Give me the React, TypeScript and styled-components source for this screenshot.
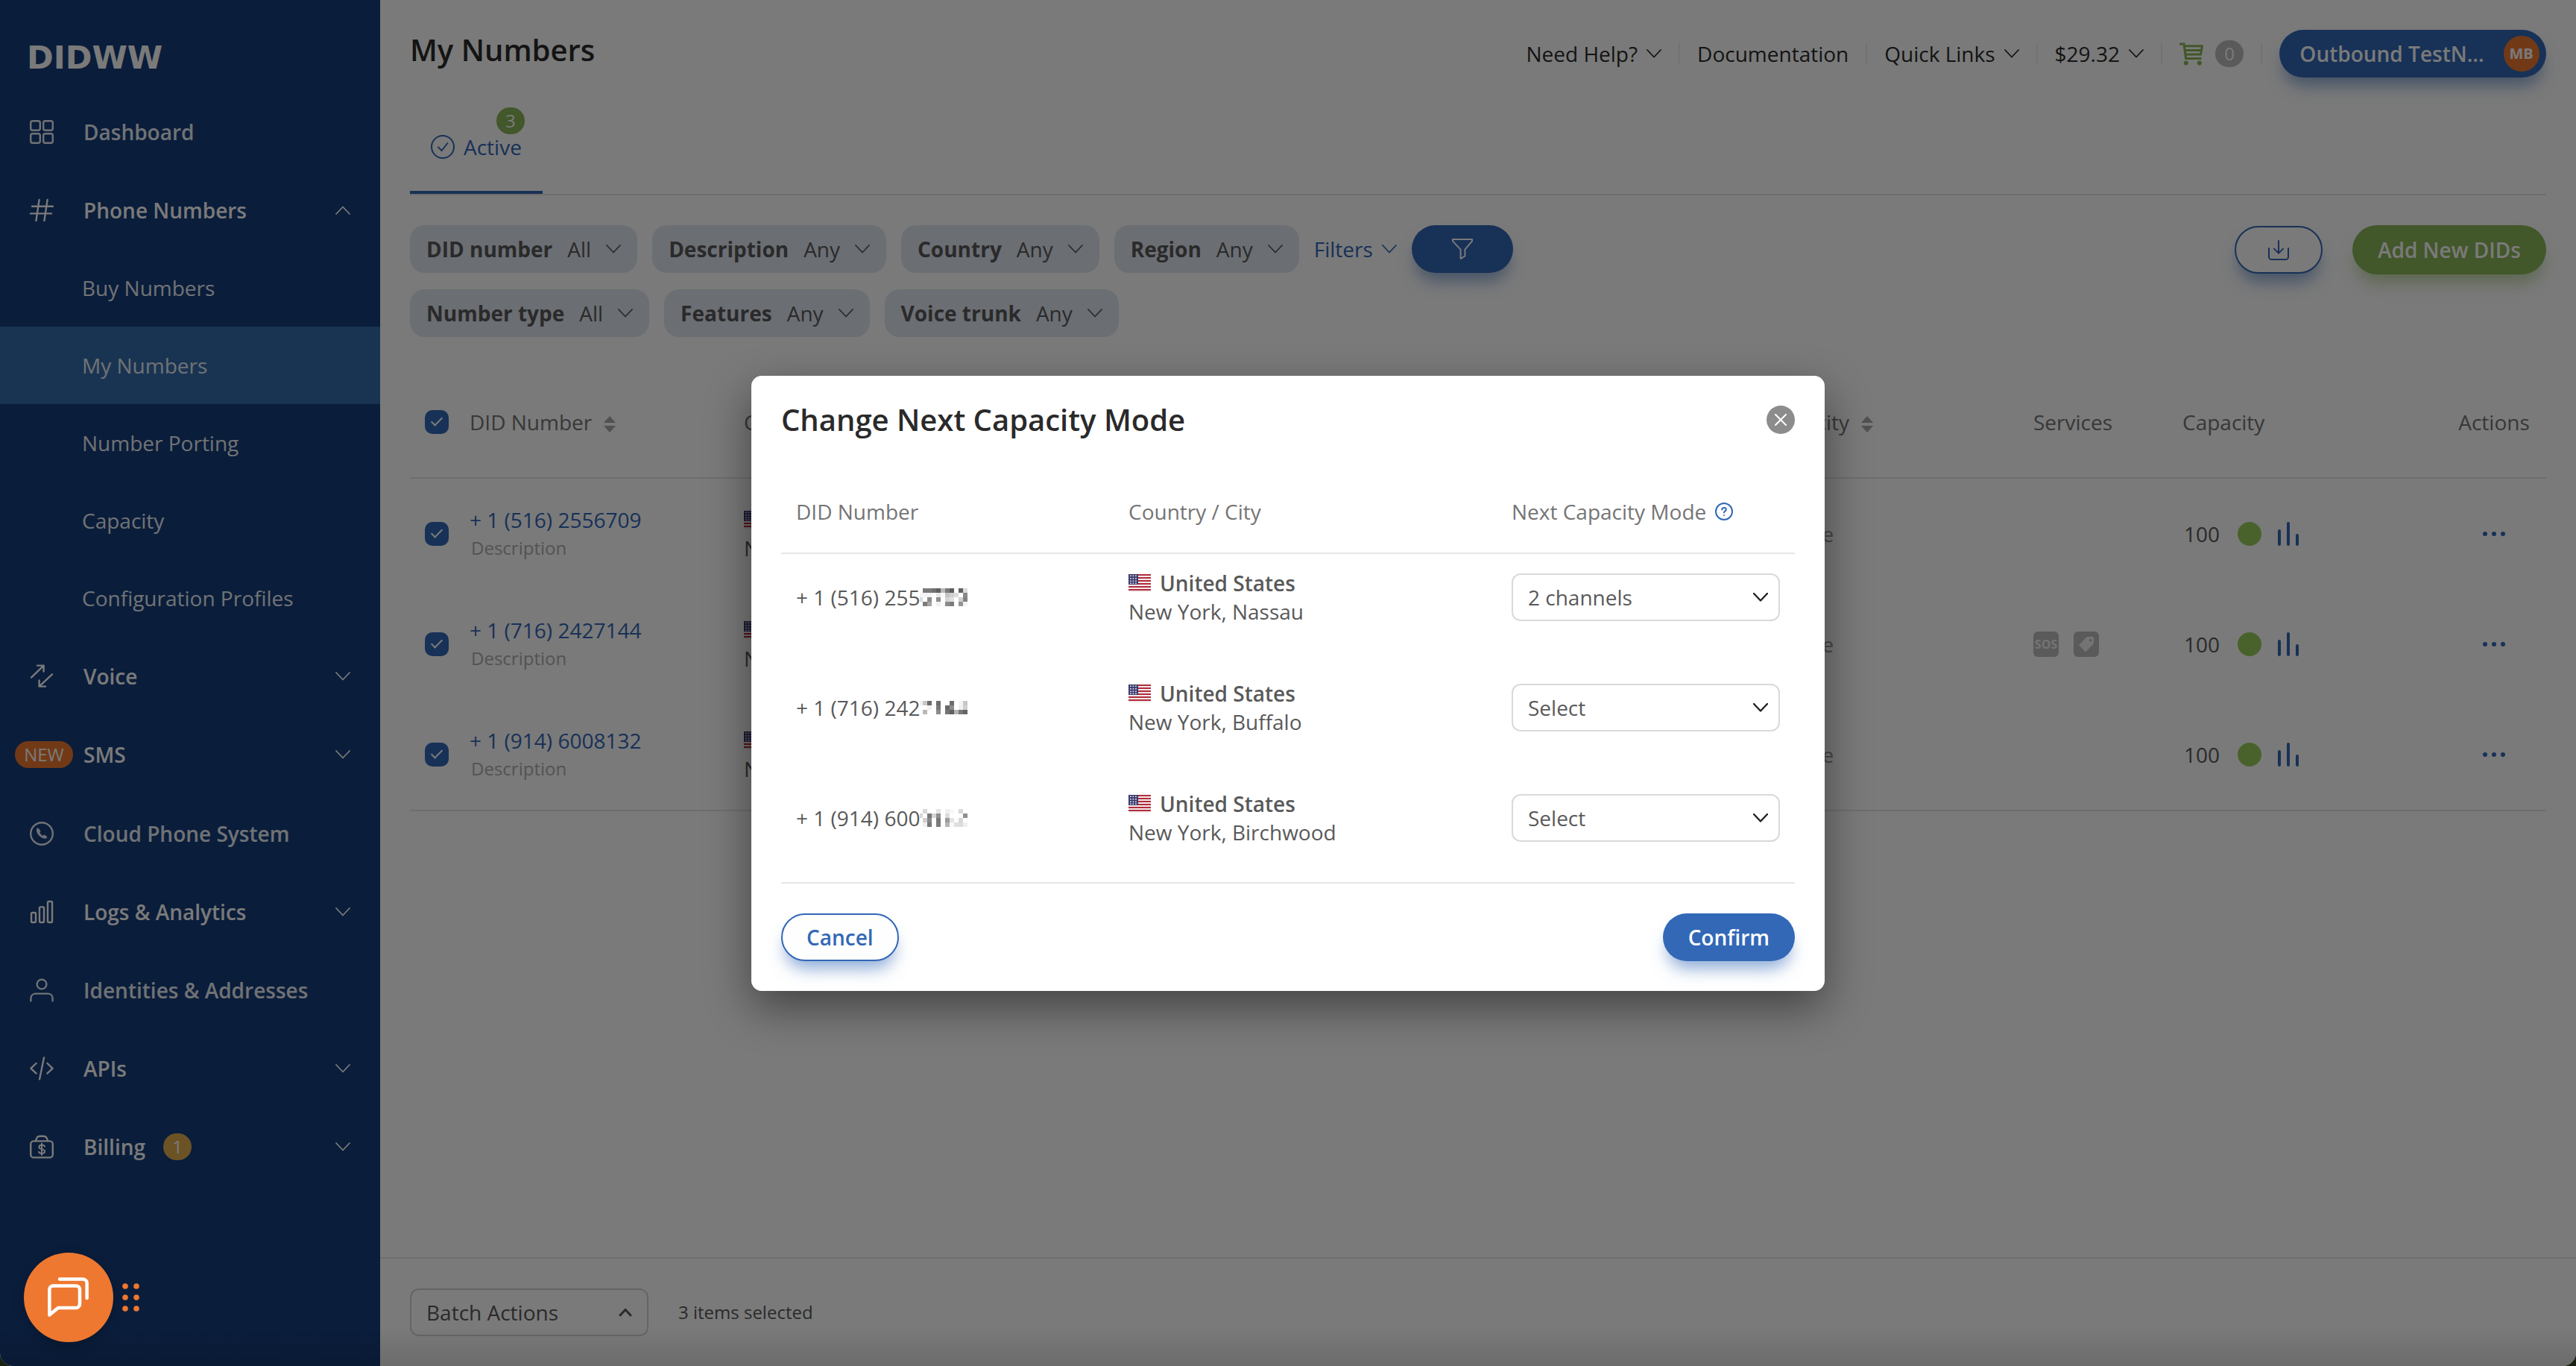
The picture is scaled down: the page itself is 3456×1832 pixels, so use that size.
import React from "react";
import styled, { createGlobalStyle, css } from "styled-components";

const color = {
  navy: "#163e7b",
  navyActive: "#366eab",
  blue: "#3268b6",
  green: "#8ab658",
  lime: "#9ace5c",
  orange: "#ee7830",
  gold: "#dfae4e",
  page: "#fefefe",
  ink: "#2a2a2a",
  text: "#595959",
  muted: "#757575",
  faint: "#aeaeae",
  line: "#e6e6e6",
  chip: "#e0e6f0",
  badge: "#bdbdbd",
};

const GlobalStyle = createGlobalStyle`
  *, *::before, *::after { box-sizing: border-box; }
  html { background: #1b2112; }
  body {
    margin: 0;
    font-family: "Open Sans", "Noto Sans", sans-serif;
    font-size: 28px;
    line-height: 38px;
    color: ${color.text};
  }
  button, select, input { font: inherit; color: inherit; margin: 0; }
  button { border: 0; background: none; padding: 0; cursor: pointer; }
  a { color: inherit; text-decoration: none; }
  h1, h2 { margin: 0; font-size: 40px; line-height: 54px; font-weight: 600; color: ${color.ink}; }
  svg { display: block; flex: none; }
`;

const Page = styled.div`
  position: relative;
  display: flex;
  min-height: 100vh;
  overflow: hidden;
  border-radius: 0 0 18px 18px;
  background: ${color.page};
`;

/* ---------- icons ---------- */

const Chevron = ({ up, heavy }: { up?: boolean; heavy?: boolean }) => (
  <svg width="20" height="12" viewBox="0 0 20 12" fill="none" stroke="currentColor"
    strokeWidth={heavy ? 2.4 : 1.8} strokeLinecap="round" strokeLinejoin="round" aria-hidden="true">
    <path d={up ? "M1 11L10 1.5L19 11" : "M1 1L10 10.5L19 1"} />
  </svg>
);

const NavSvg = styled.svg.attrs({
  width: 32, height: 32, viewBox: "0 0 32 32", fill: "none", stroke: "currentColor",
  strokeWidth: 2.4, strokeLinecap: "round", strokeLinejoin: "round", "aria-hidden": true,
})``;

const DashboardIcon = () => (
  <NavSvg>
    <rect x="1.2" y="1.2" width="12.6" height="12.6" rx="2.5" />
    <rect x="18.2" y="1.2" width="12.6" height="12.6" rx="2.5" />
    <rect x="1.2" y="18.2" width="12.6" height="12.6" rx="2.5" />
    <rect x="18.2" y="18.2" width="12.6" height="12.6" rx="2.5" />
  </NavSvg>
);
const HashIcon = () => (
  <NavSvg><path d="M12.6 2L8.4 30M23.6 2L19.4 30M3 10.8H31M1 20.4H29" /></NavSvg>
);
const VoiceIcon = () => (
  <NavSvg><path d="M2 17.6L18.6 1.6M10 1.6H18.6V9.6M30 13.4L12.6 29.6M12.6 21.4V29.6H21" /></NavSvg>
);
const PhoneIcon = () => (
  <NavSvg>
    <circle cx="16" cy="16" r="14.8" />
    <path d="M9.6 9.4C8.6 12.4 10.4 16.4 13.2 19C16 21.6 19.6 23 22.4 21.8L23 20.4L19.6 18L17.4 19.2C15.6 18.4 13.6 16.4 13 14.8L14 12.4L11.4 9Z" fill="currentColor" strokeWidth="0.8" />
  </NavSvg>
);
const StatsIcon = () => (
  <NavSvg>
    <rect x="2" y="17" width="6" height="13" rx="1.4" />
    <rect x="13" y="9.4" width="6" height="20.6" rx="1.4" />
    <rect x="24" y="2" width="6" height="28" rx="1.4" />
  </NavSvg>
);
const PersonIcon = () => (
  <NavSvg>
    <circle cx="16" cy="8" r="6.4" />
    <path d="M1.4 30.4V27C1.4 23 4.4 20.6 8 20.6H24C27.6 20.6 30.6 23 30.6 27V30.4" />
  </NavSvg>
);
const CodeIcon = () => (
  <NavSvg><path d="M8.6 9L1.4 15.8L8.6 22.6M23.4 9L30.6 15.8L23.4 22.6M19 1.4L13 30.4" /></NavSvg>
);
const BillingIcon = () => (
  <NavSvg>
    <rect x="1.2" y="8.4" width="29.6" height="22" rx="4" />
    <path d="M8 8C8.6 4 11 1.8 14 1.8H18C21 1.8 23.4 4 24 8" />
    <path d="M20 15.6C19.4 14 17.8 13.6 16 13.6C14 13.6 12.4 14.6 12.4 16.4C12.4 20 20 18.2 20 22C20 24 18.2 25 16 25C14 25 12.4 24.4 12 22.8M16 11.6V27" strokeWidth="2" />
  </NavSvg>
);

const Flag = () => (
  <svg width="30" height="24" viewBox="0 0 30 24" role="img" aria-label="US">
    <rect width="30" height="24" rx="2" fill="#f3e9ea" />
    {[0, 4, 8, 12, 16, 20].map((y) => (
      <rect key={y} y={y} width="30" height="2" fill="#b22c3c" />
    ))}
    <rect width="13" height="14" fill="#3c3b6e" />
    {[2, 5.5, 9].map((x) => [1.5, 5, 8.5, 11.5].map((y) => (
      <rect key={`${x}-${y}`} x={x} y={y} width="1.8" height="1.6" fill="#dfe0ee" />
    )))}
  </svg>
);

const SortIcon = () => (
  <svg width="16" height="22" viewBox="0 0 16 22" fill="#a9a9a9" aria-hidden="true">
    <path d="M8 0L16 9H0ZM8 22L0 13H16Z" />
  </svg>
);

/* ---------- sidebar ---------- */

const Sidebar = styled.nav`
  flex: none;
  width: 510px;
  background: ${color.navy};
  color: #fefefe;
`;
const Logo = styled.a`
  display: flex;
  align-items: flex-end;
  height: 124px;
  padding: 0 36px 24px;
  font-family: "DejaVu Sans", sans-serif;
  font-size: 43px;
  line-height: 46px;
  font-weight: 700;
`;
const navRow = css`
  display: flex;
  align-items: center;
  width: 100%;
  padding: 0 40px;
  text-align: left;
`;
const NavItem = styled.button<{ $badged?: boolean; $leaf?: boolean }>`
  ${navRow}
  height: ${(p) => (p.$badged ? 106 : 105)}px;
  font-weight: 600;
  ${(p) => p.$leaf && "color: #eaeff5;"}
`;
const NavIcon = styled.span<{ $pill?: boolean }>`
  display: flex;
  width: ${(p) => (p.$pill ? 52 : 32)}px;
  margin-left: ${(p) => (p.$pill ? -20 : 0)}px;
  margin-right: 40px;
`;
const NavLabel = styled.span`
  flex: 1;
  display: flex;
  align-items: center;
  gap: 24px;
`;
const SubItem = styled.a<{ $active?: boolean }>`
  ${navRow}
  height: 104px;
  padding-left: 110px;
  color: #eaeff5;
  background: ${(p) => (p.$active ? color.navyActive : "transparent")};
`;
const Pill = styled.span<{ $bg: string; $wide?: boolean }>`
  flex: none;
  display: flex;
  align-items: center;
  justify-content: center;
  width: ${(p) => (p.$wide ? 78 : 38)}px;
  height: 36px;
  border-radius: 18px;
  background: ${(p) => p.$bg};
  color: #fefefe;
  font-size: 24px;
  font-weight: 400;
`;

type Entry = { label: string; icon?: React.ReactNode; leaf?: boolean; open?: boolean; badge?: string; count?: number };
const entries: Entry[] = [
  { label: "Voice", icon: <VoiceIcon /> },
  { label: "SMS", badge: "NEW" },
  { label: "Cloud Phone System", icon: <PhoneIcon />, leaf: true },
  { label: "Logs & Analytics", icon: <StatsIcon /> },
  { label: "Identities & Addresses", icon: <PersonIcon />, leaf: true },
  { label: "APIs", icon: <CodeIcon /> },
  { label: "Billing", icon: <BillingIcon />, count: 1 },
];

const NavEntry = ({ label, icon, leaf, open, badge, count }: Entry) => (
  <NavItem $leaf={leaf} $badged={Boolean(badge || count)} aria-expanded={leaf ? undefined : Boolean(open)}>
    <NavIcon $pill={Boolean(badge)}>{badge ? <Pill $bg={color.orange} $wide>{badge}</Pill> : icon}</NavIcon>
    <NavLabel>{label}{count && <Pill $bg={color.gold}>{count}</Pill>}</NavLabel>
    {!leaf && <Chevron up={open} />}
  </NavItem>
);

/* ---------- main area ---------- */

const Main = styled.main`
  flex: 1;
  min-width: 0;
  display: flex;
  flex-direction: column;
`;
const TopBar = styled.header`
  display: flex;
  justify-content: space-between;
  align-items: flex-start;
  height: 144px;
  padding: 40px 40px 0;
`;
const TopNav = styled.div`
  display: flex;
  align-items: center;
  height: 64px;
  color: ${color.ink};
`;
const TopItem = styled.button`
  display: flex;
  align-items: center;
  gap: 12px;
  height: 30px;
  padding: 0 23px;
  border-right: 2px solid #eeeeee;
`;
const CartItem = styled(TopItem)`
  gap: 16px;
`;
const shadow = (rgb: string) => `0 16px 22px -6px rgba(${rgb}, 0.55)`;
const Solid = styled.button<{ $green?: boolean; $small?: boolean }>`
  display: flex;
  align-items: center;
  justify-content: center;
  height: ${(p) => (p.$green ? 66 : 64)}px;
  padding: 0 ${(p) => (p.$small ? 54 : 34)}px;
  border-radius: 33px;
  background: ${(p) => (p.$green ? color.green : color.blue)};
  box-shadow: ${(p) => shadow(p.$green ? "138,182,88" : "50,104,182")};
  color: #fefefe;
  font-weight: 600;
`;
const Account = styled(Solid)`
  gap: 26px;
  width: 358px;
  margin-left: 23px;
  padding: 0 10px 0 28px;
`;
const AccountName = styled.span`
  flex: 1;
  white-space: nowrap;
  text-align: left;
`;
const Avatar = styled.span`
  flex: none;
  width: 48px;
  height: 48px;
  border-radius: 50%;
  background: ${color.orange};
  font-size: 20px;
  line-height: 48px;
  text-align: center;
  font-weight: 700;
`;
const Outline = styled.button`
  display: flex;
  align-items: center;
  justify-content: center;
  height: 64px;
  padding: 0 32px;
  border: 2px solid ${color.blue};
  border-radius: 32px;
  background: ${color.page};
  box-shadow: ${shadow("50,104,182")};
  color: ${color.blue};
  font-weight: 600;
`;
const Download = styled(Outline)`
  width: 118px;
`;

const Tabs = styled.div`
  margin: 0 40px;
  border-bottom: 2px solid ${color.line};
`;
const Tab = styled.button`
  position: relative;
  display: flex;
  align-items: center;
  gap: 12px;
  height: 116px;
  padding: 34px 28px 40px;
  border-bottom: 4px solid ${color.blue};
  color: ${color.blue};
`;
const TabCount = styled.span`
  position: absolute;
  top: 0;
  right: 24px;
`;

const Toolbar = styled.section`
  display: flex;
  justify-content: space-between;
  align-items: flex-start;
  padding: 40px 40px 0;
`;
const ChipRows = styled.div`
  display: grid;
  gap: 22px;
`;
const Row = styled.div<{ $gap?: number }>`
  display: flex;
  align-items: center;
  gap: ${(p) => p.$gap ?? 20}px;
`;
const Chip = styled.button`
  display: flex;
  align-items: center;
  gap: 20px;
  height: 64px;
  padding: 0 22px;
  border-radius: 20px;
  background: ${color.chip};
`;
const FilterMore = styled.button`
  display: flex;
  align-items: center;
  gap: 12px;
  color: ${color.blue};
`;

const chipRows = [
  [["DID number", "All"], ["Description", "Any"], ["Country", "Any"], ["Region", "Any"]],
  [["Number type", "All"], ["Features", "Any"], ["Voice trunk", "Any"]],
];

const Listing = styled.section`
  padding: 40px 40px 0;
`;
const Table = styled.table`
  width: 100%;
  border-collapse: separate;
  border-spacing: 0;
  table-layout: fixed;
  border-bottom: 2px solid ${color.line};
  th, td { padding: 0; text-align: left; vertical-align: middle; height: 148px; }
  th { height: 150px; font-weight: 400; color: ${color.muted}; border-bottom: 2px solid ${color.line}; }
`;
const Col = styled.col<{ $w?: number }>`
  ${(p) => p.$w && `width: ${p.$w}px;`}
`;
const Check = styled.input.attrs({ type: "checkbox", defaultChecked: true })`
  appearance: none;
  display: grid;
  place-items: center;
  width: 32px;
  height: 32px;
  margin-left: 20px;
  border-radius: 10px;
  background: ${color.blue};
  &::after {
    content: "";
    width: 8px;
    height: 15px;
    margin-top: -5px;
    border: solid #fefefe;
    border-width: 0 2px 2px 0;
    transform: rotate(45deg);
  }
`;
const SortHead = styled.button`
  display: flex;
  align-items: center;
  gap: 16px;
  white-space: nowrap;
  svg { margin-top: 5px; }
`;
const NumberLink = styled.a`
  display: block;
  color: ${color.blue};
`;
const Note = styled.span`
  display: block;
  padding-left: 2px;
  font-size: 24px;
  color: ${color.faint};
`;
const Country = styled.strong`
  display: flex;
  align-items: center;
  gap: 12px;
  font-weight: 600;
`;
const Status = styled.span`
  color: #979797;
`;
const Dot = styled.span`
  width: 32px;
  height: 32px;
  border-radius: 50%;
  background: ${color.lime};
`;
const CapacityValue = styled.span`
  width: 50px;
  margin-left: 2px;
`;
const MoreButton = styled.button`
  display: flex;
  margin: 0 auto;
  color: ${color.blue};
`;
const ActionsHead = styled.th`
  && { text-align: center; }
`;
const IconTile = styled.span`
  display: flex;
  align-items: center;
  justify-content: center;
  width: 34px;
  height: 34px;
  border-radius: 6px;
  background: ${color.badge};
  color: #f2f2f2;
  font-size: 16px;
  font-weight: 700;
`;

const numbers = [
  { number: "+ 1 (516) 2556709", city: "New York, Nassau", services: false },
  { number: "+ 1 (716) 2427144", city: "New York, Buffalo", services: true },
  { number: "+ 1 (914) 6008132", city: "New York, Birchwood", services: false },
];

const Bottom = styled.footer`
  display: flex;
  align-items: center;
  gap: 40px;
  margin-top: auto;
  padding: 40px;
  border-top: 2px solid ${color.line};
  font-size: 24px;
`;
const Batch = styled.button`
  display: flex;
  align-items: center;
  justify-content: space-between;
  width: 320px;
  height: 64px;
  padding: 0 20px;
  border: 2px solid #d4d4d4;
  border-radius: 12px;
  font-size: 28px;
`;

/* ---------- dialog ---------- */

const Overlay = styled.div`
  position: absolute;
  inset: 0;
  display: flex;
  align-items: center;
  justify-content: center;
  background: linear-gradient(to top, rgba(0, 0, 0, 0.12), transparent 52px), rgba(0, 0, 0, 0.52);
`;
const Dialog = styled.section`
  width: 1440px;
  padding: 34px 40px 40px;
  border-radius: 14px;
  background: #ffffff;
  box-shadow: 0 22px 60px rgba(0, 0, 0, 0.45);
`;
const DialogHead = styled.header`
  display: flex;
  align-items: center;
  justify-content: space-between;
  height: 50px;
  margin-bottom: 53px;
`;
const Close = styled.button`
  display: flex;
  align-items: center;
  justify-content: center;
  width: 38px;
  height: 38px;
  border-radius: 50%;
  background: #8c8c8c;
  color: #ffffff;
`;
const ModeTable = styled.table`
  width: 100%;
  border-collapse: separate;
  border-spacing: 0;
  table-layout: fixed;
  border-bottom: 2px solid ${color.line};
  th, td { height: 148px; padding: 0 20px 32px; text-align: left; vertical-align: middle; }
  th { height: 102px; padding-bottom: 10px; font-weight: 400; color: ${color.muted}; border-bottom: 2px solid ${color.line}; }
  tbody tr:last-child td { height: 144px; padding-bottom: 28px; }
`;
const SelectBox = styled.span`
  display: grid;
  align-items: center;
  color: #222222;
  & > * { grid-area: 1 / 1; }
  & > svg { justify-self: end; margin-right: 16px; pointer-events: none; }
`;
const Select = styled.select`
  appearance: none;
  width: 100%;
  height: 64px;
  padding: 0 20px;
  border: 2px solid #d9d9d9;
  border-radius: 12px;
  background: #ffffff;
  color: ${color.text};
`;
const DialogFoot = styled.footer`
  display: flex;
  justify-content: space-between;
  padding-top: 40px;
`;

const mosaics = [
  ["ff7a7a7060b87a5cff60dc", "f4f4f4ffe8f8c4d0dcff88", "dcff8cff90ffd4e0ffd080", "ff7ca4fff0ff8c7cff94f4"],
  ["f0c86cff6cffff6cfff4c8", "fffff0ff78ff688cfff0d0", "ffb8ffff8cfc7460b47864"],
  ["ffd8ffffe4fff0f8ffd8ff", "d8ff78d490ffdcffffff90", "ffd088ff78ff9ce4ffd8ff", "fff078ff7cffb4f8e0dcf0"],
];
const Mosaic = ({ rows }: { rows: string[] }) => (
  <svg width="64" height={rows.length * 6} viewBox={`2 0 64 ${rows.length * 6}`} shapeRendering="crispEdges" aria-label="hidden digits">
    {rows.map((row, y) =>
      (row.match(/../g) ?? []).map((v, x) => (
        <rect key={`${x}-${y}`} x={x * 6} y={y * 6} width="6" height="6" fill={`#${v}${v}${v}`} />
      )),
    )}
  </svg>
);

const modes = [
  { prefix: "+ 1 (516) 255", value: "2 channels" },
  { prefix: "+ 1 (716) 242", value: "Select" },
  { prefix: "+ 1 (914) 600", value: "Select" },
];

/* ---------- chat launcher ---------- */

const Chat = styled.div`
  position: absolute;
  left: 32px;
  bottom: 32px;
  display: flex;
  align-items: center;
  gap: 12px;
  color: ${color.orange};
`;
const ChatButton = styled.button`
  display: flex;
  align-items: center;
  justify-content: center;
  width: 120px;
  height: 120px;
  border-radius: 50%;
  background: ${color.orange};
  box-shadow: 0 4px 16px rgba(0, 0, 0, 0.2);
  color: #ffffff;
`;

export default function App() {
  return (
    <>
      <GlobalStyle />
      <Page>
        <Sidebar aria-label="Primary">
          <Logo href="#home">DIDWW</Logo>
          <NavEntry label="Dashboard" icon={<DashboardIcon />} leaf />
          <NavEntry label="Phone Numbers" icon={<HashIcon />} open />
          {["Buy Numbers", "My Numbers", "Number Porting", "Capacity", "Configuration Profiles"].map((label) => (
            <SubItem key={label} href="#numbers" $active={label === "My Numbers"}>{label}</SubItem>
          ))}
          {entries.map((entry) => <NavEntry key={entry.label} {...entry} />)}
        </Sidebar>

        <Main>
          <TopBar>
            <h1>My Numbers</h1>
            <TopNav>
              <TopItem>Need Help?<Chevron /></TopItem>
              <TopItem>Documentation</TopItem>
              <TopItem>Quick Links<Chevron /></TopItem>
              <TopItem>$29.32<Chevron /></TopItem>
              <CartItem aria-label="Cart">
                <svg width="32" height="32" viewBox="0 0 32 32" fill="none" stroke={color.green} strokeWidth="3" aria-hidden="true">
                  <path d="M0 3H6L8.6 22.5H29.5M7 5.8H30.4L28.6 17H8M8 11.4H29" />
                  <circle cx="8.8" cy="28.4" r="3" fill={color.green} stroke="none" />
                  <circle cx="26.8" cy="28.4" r="3" fill={color.green} stroke="none" />
                </svg>
                <Pill $bg={color.badge}>0</Pill>
              </CartItem>
              <Account>
                <AccountName>Outbound TestN...</AccountName>
                <Avatar>MB</Avatar>
              </Account>
            </TopNav>
          </TopBar>

          <Tabs>
            <Tab>
              <svg width="32" height="32" viewBox="0 0 32 32" fill="none" stroke="currentColor" strokeWidth="2" strokeLinecap="round" strokeLinejoin="round" aria-hidden="true">
                <circle cx="16" cy="16" r="15" />
                <path d="M10 16.4L14.6 21L22.4 11" />
              </svg>
              Active
              <TabCount><Pill $bg={color.green}>3</Pill></TabCount>
            </Tab>
          </Tabs>

          <Toolbar>
            <ChipRows>
              {chipRows.map((row, i) => (
                <Row key={i}>
                  {row.map(([name, value]) => (
                    <Chip key={name}><b>{name}</b>{value}<Chevron /></Chip>
                  ))}
                  {i === 0 && (
                    <>
                      <FilterMore>Filters<Chevron /></FilterMore>
                      <Solid $small aria-label="Apply filters">
                        <svg width="28" height="28" viewBox="0 0 28 28" fill="none" stroke="currentColor" strokeWidth="2" strokeLinejoin="round" aria-hidden="true">
                          <path d="M1 1H27V3.4L17.4 14.6V23.4L11.6 27V14.6L1 3.4Z" />
                        </svg>
                      </Solid>
                    </>
                  )}
                </Row>
              ))}
            </ChipRows>
            <Row $gap={40}>
              <Download aria-label="Download">
                <svg width="28" height="28" viewBox="0 0 28 28" fill="none" stroke="currentColor" strokeWidth="2" strokeLinecap="round" strokeLinejoin="round" aria-hidden="true">
                  <path d="M14 2V18M8 12.6L14 18.6L20 12.6M1 12V23.4C1 25.4 2.6 27 4.6 27H23.4C25.4 27 27 25.4 27 23.4V12" />
                </svg>
              </Download>
              <Solid $green>Add New DIDs</Solid>
            </Row>
          </Toolbar>

          <Listing>
            <Table>
              <colgroup>
                <Col $w={80} /><Col $w={368} /><Col /><Col $w={426} /><Col $w={200} /><Col $w={348} /><Col $w={140} />
              </colgroup>
              <thead>
                <tr>
                  <th><Check aria-label="Select all" /></th>
                  <th><SortHead>DID Number<SortIcon /></SortHead></th>
                  <th>Country / City</th>
                  <th><SortHead>Next Capacity<SortIcon /></SortHead></th>
                  <th>Services</th>
                  <th>Capacity</th>
                  <ActionsHead>Actions</ActionsHead>
                </tr>
              </thead>
              <tbody>
                {numbers.map((n) => (
                  <tr key={n.number}>
                    <td><Check aria-label={n.number} /></td>
                    <td><NumberLink href="#number">{n.number}</NumberLink><Note>Description</Note></td>
                    <td><Country><Flag />United States</Country>{n.city}</td>
                    <td><Status>Not suitable</Status></td>
                    <td>
                      {n.services && (
                        <Row>
                          <IconTile>SOS</IconTile>
                          <IconTile>
                            <svg width="24" height="24" viewBox="0 0 24 24" fill="currentColor" aria-hidden="true">
                              <path fillRule="evenodd" d="M12.6 2H20.4C21.4 2 22 2.8 22 3.6V11L11 22.4L2 13.2ZM17.6 5A1.8 1.8 0 1 0 17.7 5Z" />
                            </svg>
                          </IconTile>
                        </Row>
                      )}
                    </td>
                    <td>
                      <Row $gap={22}>
                        <CapacityValue>100</CapacityValue>
                        <Dot />
                        <svg width="28" height="32" viewBox="0 0 28 32" stroke={color.blue} strokeWidth="4" strokeLinecap="round" aria-hidden="true">
                          <path d="M2 12V30M14 2V30M26 18V30" />
                        </svg>
                      </Row>
                    </td>
                    <td>
                      <MoreButton aria-label="Row actions">
                        <svg width="32" height="8" viewBox="0 0 32 8" fill="currentColor" aria-hidden="true">
                          <circle cx="4" cy="4" r="3" /><circle cx="16" cy="4" r="3" /><circle cx="28" cy="4" r="3" />
                        </svg>
                      </MoreButton>
                    </td>
                  </tr>
                ))}
              </tbody>
            </Table>
          </Listing>

          <Bottom>
            <Batch>
              Batch Actions
              <svg width="18" height="12" viewBox="0 0 18 12" fill="none" stroke="currentColor" strokeWidth="3" strokeLinecap="round" strokeLinejoin="round" aria-hidden="true">
                <path d="M2 10L9 2.4L16 10" />
              </svg>
            </Batch>
            <span>3 items selected</span>
          </Bottom>
        </Main>

        <Overlay>
          <Dialog role="dialog" aria-modal="true" aria-labelledby="dialog-title">
            <DialogHead>
              <h2 id="dialog-title">Change Next Capacity Mode</h2>
              <Close aria-label="Close">
                <svg width="16" height="16" viewBox="0 0 16 16" stroke="currentColor" strokeWidth="2" strokeLinecap="round" aria-hidden="true">
                  <path d="M1 1L15 15M15 1L1 15" />
                </svg>
              </Close>
            </DialogHead>
            <ModeTable>
              <colgroup><Col $w={446} /><Col /><Col $w={400} /></colgroup>
              <thead>
                <tr>
                  <th>DID Number</th>
                  <th>Country / City</th>
                  <th>
                    <Row $gap={12}>
                      Next Capacity Mode
                      <svg width="24" height="24" viewBox="0 0 24 24" fill="none" stroke={color.blue} strokeWidth="2" strokeLinecap="round" aria-hidden="true">
                        <circle cx="12" cy="12" r="11" />
                        <path d="M9.2 9.6C9.2 8 10.4 7 12 7C13.6 7 14.8 8 14.8 9.4C14.8 11.4 12 11.4 12 13.6M12 16.9V17" />
                      </svg>
                    </Row>
                  </th>
                </tr>
              </thead>
              <tbody>
                {modes.map((m, i) => (
                  <tr key={m.prefix}>
                    <td><Row $gap={0}>{m.prefix}<Mosaic rows={mosaics[i]} /></Row></td>
                    <td><Country><Flag />United States</Country>{numbers[i].city}</td>
                    <td>
                      <SelectBox>
                        <Select defaultValue={m.value} aria-label={`Next capacity mode for ${numbers[i].city}`}>
                          <option>Select</option>
                          <option>2 channels</option>
                        </Select>
                        <Chevron heavy />
                      </SelectBox>
                    </td>
                  </tr>
                ))}
              </tbody>
            </ModeTable>
            <DialogFoot>
              <Outline>Cancel</Outline>
              <Solid>Confirm</Solid>
            </DialogFoot>
          </Dialog>
        </Overlay>

        <Chat>
          <ChatButton aria-label="Open chat">
            <svg width="56" height="56" viewBox="0 0 56 56" fill="none" stroke="currentColor" strokeWidth="4.5" strokeLinecap="round" strokeLinejoin="round" aria-hidden="true">
              <path d="M7 12.5H38C40.6 12.5 43 14.8 43 17.4V37C43 39.6 40.6 42 38 42H14L2.4 51.6V17.4C2.4 14.8 4.4 12.5 7 12.5Z" />
              <path d="M16 3.4H47C50 3.4 52.6 5.6 52.6 8.6V29" />
            </svg>
          </ChatButton>
          <svg width="24" height="38" viewBox="0 0 24 38" fill="currentColor" aria-hidden="true">
            {[4, 19].map((x) => [4, 19, 34].map((y) => <circle key={`${x}-${y}`} cx={x} cy={y} r="3.8" />))}
          </svg>
        </Chat>
      </Page>
    </>
  );
}
